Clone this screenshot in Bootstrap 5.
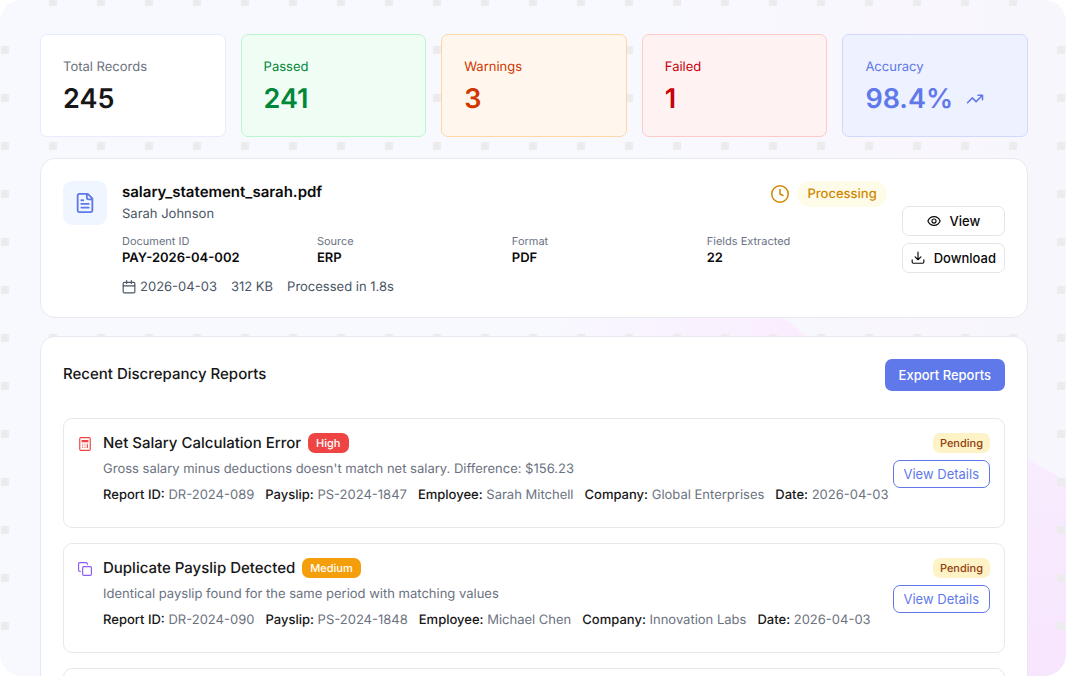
<!DOCTYPE html>
<html lang="en">
<head>
<meta charset="utf-8">
<meta name="viewport" content="width=device-width, initial-scale=1">
<title>Payroll document validation</title>
<link href="https://cdn.jsdelivr.net/npm/bootstrap@5.3.0/dist/css/bootstrap.min.css" rel="stylesheet">
<style>
  body { font-family: Inter, "Liberation Sans", sans-serif; font-size: 13px; line-height: 20px; color: #171717; background: #fff; text-rendering: geometricPrecision; }
  svg { fill: none; stroke: currentColor; stroke-width: 2; stroke-linecap: round; stroke-linejoin: round; flex: none; }
  .frame {
    padding: 34px 38px 0 40px; border-radius: 22px;
    background: linear-gradient(90deg, #f8f9ff 0, #f8f9ff 60%, #f9f6fd 85%, #f8f6fd 100%);
    position: relative;
  }
  /* soft pink discs and square dots of the backdrop */
  .disc { position: absolute; border-radius: 50%; aspect-ratio: 1; }
  .disc-middle { width: 35%; left: 46%; top: 42%; background: linear-gradient(90deg, transparent 10%, #faeefe 80%); }
  .disc-corner { width: 54%; right: -12%; top: 64%; background: linear-gradient(180deg, #f9edfe 0, #f7e5fe 45%); }
  .dots { inset: 0; }
  .content { position: relative; }
  .stats { gap: 15px; margin-bottom: 21px; }
  .stat { flex: 1 1 0; height: 103px; padding: 21px 22px; border: 1px solid #e8eafd; border-radius: 7px; background: #fff; }
  .stat-label { color: #6b7280; line-height: 22px; }
  .stat-value { font-size: 27px; line-height: 41px; font-weight: 600; color: #171717; gap: 13px; }
  .stat.tinted .stat-label, .stat.tinted .stat-value { color: inherit; }
  .passed { color: #00873a; background: #f0fdf4; border-color: #b9f8cf; }
  .warned { color: #d03801; background: #fff7ed; border-color: #ffd6a7; }
  .failed { color: #c8000b; background: #fef2f2; border-color: #ffc9c9; }
  .accuracy { color: #5f79ea; background: #eef1ff; border-color: #d0d9fb; }
  .panel { background: #fff; border: 1px solid #e8e9f0; border-radius: 15px; padding: 22px 22px 20px; }
  .doc { gap: 15px; margin-bottom: 18px; }
  .doc-icon { width: 44px; height: 44px; border-radius: 9px; background: #eff6ff; color: #5f79ea; }
  .name { font-size: 15px; font-weight: 600; line-height: 21px; color: #0a0a0a; }
  .muted { color: #4a5565; }
  .owner { line-height: 24px; }
  .state { gap: 8px; height: 26px; color: #d08700; }
  .state-pill { background: #fefce8; border-radius: 13px; padding: 3px 10px; font-weight: 500; }
  .facts { display: grid; grid-template-columns: repeat(4, 1fr); gap: 15px; margin: 8px 0 10px; }
  .facts dt { font-size: 11px; font-weight: 400; line-height: 15px; color: #6a7282; }
  .facts dd { font-weight: 600; line-height: 18px; color: #0a0a0a; margin: 0; }
  .file-info { gap: 14px; }
  .actions { gap: 7px; }
  .btn { font-size: 13px; font-weight: 500; line-height: 20px; border-radius: 7px; }
  .btn-plain { --bs-btn-border-color: #e5e5e5; --bs-btn-color: #0a0a0a; --bs-btn-hover-border-color: #ccc; padding: 4px 8px; gap: 9px; }
  .btn-solid { --bs-btn-color: #fff; --bs-btn-bg: #5f79ea; --bs-btn-hover-bg: #4c66d8; --bs-btn-hover-color: #fff; padding: 5px 13px; }
  .btn-line { --bs-btn-color: #5f79ea; --bs-btn-border-color: #5f79ea; --bs-btn-hover-bg: #eef1ff; --bs-btn-hover-color: #5f79ea; padding: 3px 10px; font-weight: 400; }
  .reports-title { font-size: 15px; font-weight: 500; line-height: 30px; margin: 0; color: #171717; }
  .reports-head { margin-bottom: 27px; }
  .report-list { gap: 15px; }
  .report { border: 1px solid #e8e8eb; border-radius: 9px; min-height: 110px; padding: 14px; }
  .report > svg { margin: 4px 11px 0 0; }
  .report h3 { font-size: 15px; font-weight: 500; line-height: 20px; margin: 0; }
  .report-head { gap: 7px; }
  .tag { font-size: 11px; line-height: 16px; font-weight: 500; border-radius: 7px; padding: 2px 8px; color: #fff; }
  .high { background: #ef4444; }
  .medium { background: #f59e0b; }
  .pending { background: #fef3c7; color: #92400e; padding: 2px 7px; }
  .gray { color: #6b7280; }
  .desc { margin: 6px 0; }
  .details { column-gap: 11px; }
  .details b { font-weight: 500; color: #171717; }
  .side { gap: 7px; }
</style>
</head>
<body>
<div class="frame vh-100 overflow-hidden">
  <div class="disc disc-middle"></div>
  <div class="disc disc-corner"></div>
  <svg class="dots position-absolute w-100 h-100" aria-hidden="true"><defs><pattern id="squares" x="1" y="-2" width="48" height="48" patternUnits="userSpaceOnUse"><rect width="8" height="8" fill="#ebebeb" fill-opacity=".9" stroke="none"/></pattern></defs><rect width="100%" height="100%" fill="url(#squares)" stroke="none"/></svg>
  <main class="content">
    <section class="stats d-flex">
      <div class="stat"><div class="stat-label">Total Records</div><div class="stat-value">245</div></div>
      <div class="stat tinted passed"><div class="stat-label">Passed</div><div class="stat-value">241</div></div>
      <div class="stat tinted warned"><div class="stat-label">Warnings</div><div class="stat-value">3</div></div>
      <div class="stat tinted failed"><div class="stat-label">Failed</div><div class="stat-value">1</div></div>
      <div class="stat tinted accuracy"><div class="stat-label">Accuracy</div><div class="stat-value d-flex align-items-center">98.4%
        <svg width="18" height="18" viewBox="0 0 24 24"><path d="M22 7l-8.500 8.500-5-5L2 17M16 7h6v6"/></svg></div></div>
    </section>

    <section class="panel doc d-flex">
      <div class="doc-icon d-flex align-items-center justify-content-center flex-shrink-0">
        <svg width="22" height="22" viewBox="0 0 24 24"><path d="M15 2H6a2 2 0 0 0-2 2v16a2 2 0 0 0 2 2h12a2 2 0 0 0 2-2V7zM14 2v4a2 2 0 0 0 2 2h4M10 9H8M16 13H8M16 17H8"/></svg>
      </div>
      <div class="flex-grow-1">
        <div class="d-flex justify-content-between align-items-start">
          <div>
            <div class="name">salary_statement_sarah.pdf</div>
            <div class="owner muted">Sarah Johnson</div>
          </div>
          <div class="state d-flex align-items-center">
            <svg width="18" height="18" viewBox="0 0 24 24"><circle cx="12" cy="12" r="11"/><path d="M12 6v6l4 2"/></svg>
            <span class="state-pill">Processing</span>
          </div>
        </div>
        <dl class="facts">
          <div><dt>Document ID</dt><dd>PAY-2026-04-002</dd></div>
          <div><dt>Source</dt><dd>ERP</dd></div>
          <div><dt>Format</dt><dd>PDF</dd></div>
          <div><dt>Fields Extracted</dt><dd>22</dd></div>
        </dl>
        <div class="file-info muted d-flex">
          <span class="d-flex align-items-center gap-1"><svg width="14" height="14" viewBox="0 0 24 24"><path d="M8 1v5M16 1v5M2 10h20"/><rect x="2" y="4" width="20" height="18" rx="2"/></svg>2026-04-03</span>
          <span>312 KB</span>
          <span>Processed in 1.8s</span>
        </div>
      </div>
      <div class="actions d-flex flex-column align-self-center">
        <button type="button" class="btn btn-plain d-flex align-items-center justify-content-center"><svg width="14" height="14" viewBox="0 0 24 24"><path d="M1.500 12C3.500 7 7.500 4.500 12 4.500S20.500 7 22.500 12C20.500 17 16.500 19.500 12 19.500S3.500 17 1.500 12z"/><circle cx="12" cy="12" r="3.500"/></svg>View</button>
        <button type="button" class="btn btn-plain d-flex align-items-center justify-content-center"><svg width="14" height="14" viewBox="0 0 24 24"><path d="M12 2v13M7 10l5 5 5-5M2 15v4a2 2 0 0 0 2 2h16a2 2 0 0 0 2-2v-4"/></svg>Download</button>
      </div>
    </section>

    <section class="panel">
      <div class="reports-head d-flex justify-content-between align-items-start">
        <h2 class="reports-title">Recent Discrepancy Reports</h2>
        <button type="button" class="btn btn-solid">Export Reports</button>
      </div>
      <div class="report-list d-flex flex-column">
        <article class="report d-flex">
          <svg width="14" height="14" viewBox="0 0 24 24" color="#ef4444"><rect x="3" y="1" width="18" height="22" rx="2"/><path d="M7 6h10v2H7zM16 14v4M12 12h.01M8 12h.01M16 12h.01M12 15h.01M8 15h.01M12 18h.01M8 18h.01"/></svg>
          <div class="flex-grow-1">
            <div class="report-head d-flex align-items-center"><h3>Net Salary Calculation Error</h3><span class="tag high">High</span></div>
            <p class="desc gray">Gross salary minus deductions doesn't match net salary. Difference: $156.23</p>
            <div class="details gray d-flex flex-wrap"><span><b>Report ID:</b> DR-2024-089</span><span><b>Payslip:</b> PS-2024-1847</span><span><b>Employee:</b> Sarah Mitchell</span><span><b>Company:</b> Global Enterprises</span><span><b>Date:</b> 2026-04-03</span></div>
          </div>
          <div class="side d-flex flex-column align-items-end flex-shrink-0"><span class="tag pending">Pending</span><button type="button" class="btn btn-line">View Details</button></div>
        </article>
        <article class="report d-flex">
          <svg width="14" height="14" viewBox="0 0 24 24" color="#8b5cf6"><rect x="8" y="8" width="15" height="15" rx="2"/><path d="M4 16H3a2 2 0 0 1-2-2V3a2 2 0 0 1 2-2h11a2 2 0 0 1 2 2v1"/></svg>
          <div class="flex-grow-1">
            <div class="report-head d-flex align-items-center"><h3>Duplicate Payslip Detected</h3><span class="tag medium">Medium</span></div>
            <p class="desc gray">Identical payslip found for the same period with matching values</p>
            <div class="details gray d-flex flex-wrap"><span><b>Report ID:</b> DR-2024-090</span><span><b>Payslip:</b> PS-2024-1848</span><span><b>Employee:</b> Michael Chen</span><span><b>Company:</b> Innovation Labs</span><span><b>Date:</b> 2026-04-03</span></div>
          </div>
          <div class="side d-flex flex-column align-items-end flex-shrink-0"><span class="tag pending">Pending</span><button type="button" class="btn btn-line">View Details</button></div>
        </article>
        <article class="report"></article>
      </div>
    </section>
  </main>
</div>
<script src="https://cdn.jsdelivr.net/npm/bootstrap@5.3.0/dist/js/bootstrap.bundle.min.js"></script>
</body>
</html>
